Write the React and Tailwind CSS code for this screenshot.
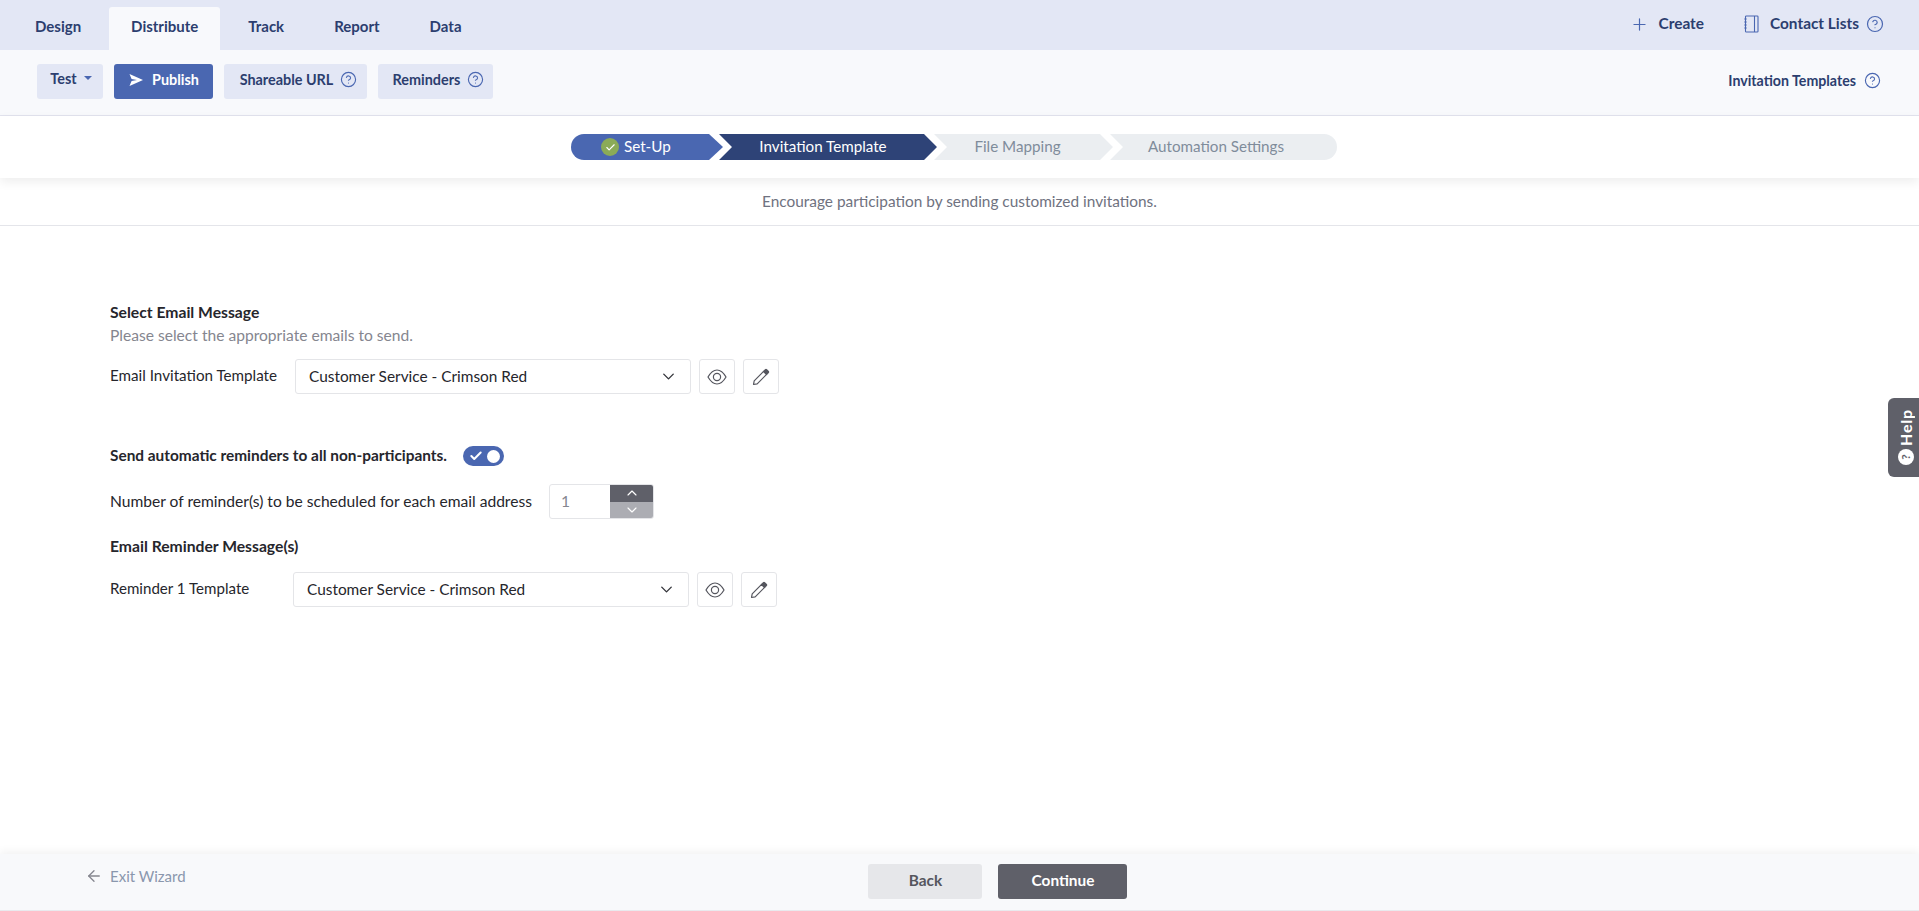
import React from 'react';
import { ArrowLeft, Check, ChevronDown, ChevronUp, CircleHelp, Plus } from 'lucide-react';

const tabs = ['Design', 'Distribute', 'Track', 'Report', 'Data'];

const HelpIcon = ({ size = 17 }) => (
  <CircleHelp size={size} strokeWidth={1.6} className="shrink-0 text-[#4a67b1]" />
);

const NotebookIcon = () => (
  <svg width="15" height="18" viewBox="0 0 15 18" fill="none" stroke="#4a67b1" strokeWidth="1.1">
    <rect x="1.5" y="1" width="12.5" height="16" rx="0.8" />
    <path d="M10.5 1v16M0.3 4h2.4M0.3 7h2.4M0.3 10h2.4M0.3 13h2.4" />
  </svg>
);

const SendIcon = () => (
  <svg width="14" height="14" viewBox="0 0 14 14" fill="#ffffff">
    <path d="M0.5 1 L14 7 L0.5 13 L2.6 8 L8 7 L2.6 6 Z" />
  </svg>
);

const EyeIcon = () => (
  <svg width="20" height="16" viewBox="0 0 20 16" fill="none" stroke="#55565e" strokeWidth="1.2">
    <path d="M1 8 C4 2.8 8 1 10 1 C12 1 16 2.8 19 8 C16 13.2 12 15 10 15 C8 15 4 13.2 1 8 Z" />
    <circle cx="10" cy="8" r="3.6" />
  </svg>
);

const PencilIcon = () => (
  <svg width="18" height="18" viewBox="0 0 18 18" fill="none" stroke="#55565e" strokeWidth="1.2">
    <path d="M1.5 16.5 L2.2 12.8 L11.6 3.4 L14.6 6.4 L5.2 15.8 Z" strokeLinejoin="round" />
    <path d="M11.6 3.4 L13.4 1.6 Q14 1.1 14.6 1.6 L16.4 3.4 Q16.9 4 16.4 4.6 L14.6 6.4 Z" fill="#55565e" />
  </svg>
);

const TemplateRow = ({ label, labelClass }) => (
  <div className="flex items-center">
    <div className={`${labelClass} pb-[3px] text-[#26262c]`}>{label}</div>
    <div className="flex h-[35px] w-[396px] items-center justify-between rounded-[3px] border border-[#e4e5e8] bg-white pl-[13px] pr-[12px] text-[15.4px] text-[#26262c]">
      <span>Customer Service - Crimson Red</span>
      <ChevronDown size={19} strokeWidth={1.75} className="text-[#33343a]" />
    </div>
    <button className="ml-2 flex h-[35px] w-[36px] items-center justify-center rounded-[3px] border border-[#e4e5e8] bg-white">
      <EyeIcon />
    </button>
    <button className="ml-2 flex h-[35px] w-[36px] items-center justify-center rounded-[3px] border border-[#e4e5e8] bg-white">
      <PencilIcon />
    </button>
  </div>
);

const Stepper = () => (
  <div className="flex h-[26px] text-[15.2px] leading-[24px]">
    <div className="flex w-[152px] items-center rounded-l-[13px] bg-[#4a67b1] pb-[2px] pl-[30px] text-white [clip-path:polygon(0_0,138px_0,100%_50%,138px_100%,0_100%)]">
      <span className="mr-[5px] mt-[2px] flex h-[18px] w-[18px] items-center justify-center rounded-full bg-[#8bab57]">
        <Check size={11} strokeWidth={2.5} className="text-white" />
      </span>
      Set-Up
    </div>
    <div className="-ml-[4px] flex w-[218px] items-center justify-center bg-[#2e4377] pb-[2px] pr-[10px] text-white [clip-path:polygon(0_0,205px_0,100%_50%,205px_100%,0_100%,13px_50%)]">
      Invitation Template
    </div>
    <div className="-ml-[3px] flex w-[179px] items-center justify-center bg-[#ebeef1] pb-[2px] pr-[12px] text-[#7f8c9b] [clip-path:polygon(0_0,166px_0,100%_50%,166px_100%,0_100%,13px_50%)]">
      File Mapping
    </div>
    <div className="-ml-[3px] flex w-[227px] items-center justify-center rounded-r-[13px] bg-[#ebeef1] pb-[2px] pr-[15px] text-[#7f8c9b] [clip-path:polygon(0_0,100%_0,100%_100%,0_100%,13px_50%)]">
      Automation Settings
    </div>
  </div>
);

const App = () => {
  return (
    <div className="relative flex h-[911px] flex-col overflow-hidden bg-white font-['Lato','Liberation_Sans',sans-serif]">
      {/* Top tabs */}
      <div className="flex h-[50px] shrink-0 items-end justify-between bg-[#e3e7f5] pl-[13px] pr-[35px]">
        <div className="flex gap-[6px]">
          {tabs.map((tab) => (
            <div
              key={tab}
              className={`flex h-[43px] items-center rounded-t-[3px] px-[22px] pb-[5px] text-[15px] font-bold text-[#2c3e6f] ${
                tab === 'Distribute' ? 'bg-[#f8f9fc]' : ''
              }`}
            >
              {tab}
            </div>
          ))}
        </div>
        <div className="flex h-[50px] items-center pb-[2px] text-[15.4px] font-bold text-[#2c3e6f]">
          <Plus size={19} strokeWidth={1.5} className="text-[#4a67b1]" />
          <span className="ml-[10px]">Create</span>
          <span className="ml-[40px]">
            <NotebookIcon />
          </span>
          <span className="ml-[11px] mr-[7px]">Contact Lists</span>
          <HelpIcon size={18} />
        </div>
      </div>

      {/* Action bar */}
      <div className="flex h-[66px] shrink-0 items-center justify-between border-b border-[#e2e3ee] bg-[#f8f9fc] pb-[2px] pl-[37px] pr-[38px] text-[14.4px] font-bold text-[#2c3e6f]">
        <div className="flex gap-[11px]">
          <button className="flex h-[35px] w-[66px] items-start justify-center rounded-[3px] bg-[#e3e7f5] pl-[2px] pt-[4px]">
            Test
            <span className="ml-[7px] mt-[8px] h-0 w-0 border-x-[4px] border-t-[4px] border-x-transparent border-t-[#4a67b1]" />
          </button>
          <button className="flex h-[35px] w-[99px] items-center justify-center gap-[9px] rounded-[3px] bg-[#4a67b1] pb-[4px] pl-[1px] text-white">
            <SendIcon />
            Publish
          </button>
          <button className="flex h-[35px] w-[143px] items-center justify-center gap-[7px] rounded-[3px] bg-[#e3e7f5] pb-[4px] pl-[6px]">
            Shareable URL
            <HelpIcon />
          </button>
          <button className="flex h-[35px] w-[115px] items-center justify-center gap-[7px] rounded-[3px] bg-[#e3e7f5] pb-[4px] pl-[6px]">
            Reminders
            <HelpIcon />
          </button>
        </div>
        <div className="flex items-center gap-[8px] pb-[2px] text-[14.2px]">
          Invitation Templates
          <HelpIcon />
        </div>
      </div>

      {/* Steps */}
      <div className="z-10 flex h-[62px] shrink-0 items-center justify-center bg-white pr-[11px] shadow-[0_4px_10px_rgba(0,0,0,0.07)]">
        <Stepper />
      </div>

      {/* Intro line */}
      <div className="flex h-[48px] shrink-0 items-center justify-center border-b border-[#e4e5ea] text-[15.4px] text-[#6f7280]">
        Encourage participation by sending customized invitations.
      </div>

      {/* Form */}
      <div className="flex-1 pl-[110px] pt-[76px]">
        <div className="text-[15.7px] font-bold leading-[20px] text-[#26262c]">Select Email Message</div>
        <div className="mt-[3px] text-[15.6px] leading-[20px] text-[#85868f]">Please select the appropriate emails to send.</div>
        <div className="mt-[14px]">
          <TemplateRow label="Email Invitation Template" labelClass="w-[185px] text-[15.2px]" />
        </div>

        <div className="mt-[52px] flex h-[20px] items-center text-[15.4px] font-bold text-[#26262c]">
          Send automatic reminders to all non-participants.
          <span className="ml-[16px] flex h-[20px] w-[41px] items-center justify-between rounded-full bg-[#4a67b1] pl-[6px] pr-[4px]">
            <Check size={14} strokeWidth={3.5} className="text-white" />
            <span className="h-[13px] w-[13px] rounded-full bg-white" />
          </span>
        </div>

        <div className="mt-[18px] flex items-center text-[15.6px] text-[#26262c]">
          <span className="w-[439px]">Number of reminder(s) to be scheduled for each email address</span>
          <div className="flex h-[35px] w-[105px] overflow-hidden rounded-[3px] border border-[#e4e5e8] bg-white">
            <span className="flex flex-1 items-center pl-[11px] text-[#85868f]">1</span>
            <div className="flex w-[43px] flex-col">
              <span className="flex h-1/2 items-center justify-center bg-[#5f6069]">
                <ChevronUp size={16} strokeWidth={1.75} className="text-white" />
              </span>
              <span className="flex h-1/2 items-center justify-center bg-[#acadb3]">
                <ChevronDown size={16} strokeWidth={1.75} className="text-white" />
              </span>
            </div>
          </div>
        </div>

        <div className="mt-[17px] text-[15.7px] font-bold leading-[20px] text-[#26262c]">Email Reminder Message(s)</div>
        <div className="mt-[16px]">
          <TemplateRow label="Reminder 1 Template" labelClass="w-[183px] text-[15.1px]" />
        </div>
      </div>

      {/* Footer */}
      <div className="relative flex h-[57px] shrink-0 items-center justify-center border-b border-[#e9eaee] bg-[#f8f9fb] pb-[2px] pl-[75px] shadow-[0_-3px_8px_rgba(0,0,0,0.05)]">
        <div className="absolute left-[85px] top-[11px] flex items-center gap-[7px] text-[15px] text-[#8a97ad]">
          <ArrowLeft size={18} strokeWidth={1.75} className="text-[#85868f]" />
          Exit Wizard
        </div>
        <div className="flex gap-[16px] text-[15.4px] font-bold">
          <button className="h-[35px] w-[114px] rounded-[3px] bg-[#e6e7ea] pl-[2px] text-[#55565e]">Back</button>
          <button className="h-[35px] w-[129px] rounded-[3px] bg-[#5f6069] pl-[2px] text-white">Continue</button>
        </div>
      </div>

      {/* Help tab */}
      <div className="absolute right-0 top-[398px] z-20 flex h-[79px] w-[31px] flex-col-reverse items-center justify-start gap-[3px] rounded-l-[6px] bg-[#5f6069] pb-[12px] pl-[5px]">
        <span className="flex h-[16px] w-[16px] rotate-[-90deg] items-center justify-center rounded-full bg-white text-[12px] font-bold text-[#5f6069]">?</span>
        <span className="rotate-180 text-[16px] font-bold leading-none tracking-[0.8px] text-white [writing-mode:vertical-rl]">Help</span>
      </div>
    </div>
  );
};

export default App;
